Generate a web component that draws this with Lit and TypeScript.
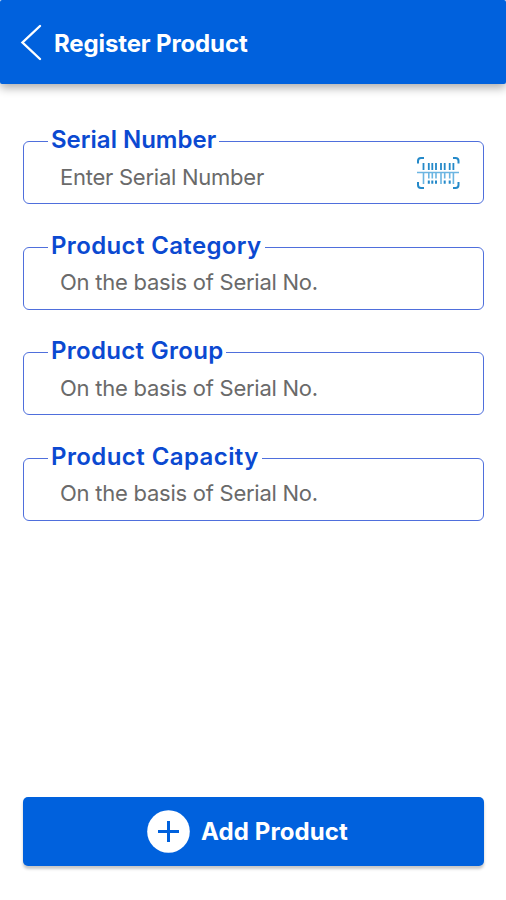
import { LitElement, html, css } from "lit";
import { customElement, property } from "lit/decorators.js";
import { styleMap } from "lit/directives/style-map.js";

@customElement("form-field")
class FormField extends LitElement {
  @property() label = "";
  @property() hint = "";
  @property({ type: Number }) tracking = 0;

  static styles = css`
    :host { display: block; }
    .box {
      position: relative;
      box-sizing: border-box;
      height: 63px;
      border: 1.5px solid #4f6fdc;
      border-radius: 6px;
      display: flex;
      align-items: center;
      justify-content: space-between;
      padding: 8px 23px 0 36px;
    }
    .label {
      position: absolute;
      left: 24px;
      top: -17px;
      padding: 0 3px;
      background: #fff;
      color: #0b49d1;
      font-size: 24px;
      line-height: 30px;
      font-weight: 600;
      white-space: nowrap;
    }
    .hint {
      color: #6a6a6a;
      font-size: 22px;
      line-height: 28px;
      letter-spacing: -0.25px;
      white-space: nowrap;
    }
  `;

  render() {
    return html`<div class="box">
      <span class="label" style=${styleMap({ letterSpacing: `${this.tracking}px` })}>${this.label}</span>
      <span class="hint">${this.hint}</span>
      <slot></slot>
    </div>`;
  }
}

@customElement("app-root")
class AppRoot extends LitElement {
  static styles = css`
    :host {
      display: flex;
      flex-direction: column;
      box-sizing: border-box;
      height: 900px;
      background: #fff;
      font-family: Inter, "Open Sans", sans-serif;
    }
    .bar {
      box-sizing: border-box;
      height: 84px;
      display: flex;
      align-items: center;
      gap: 12px;
      padding-left: 20px;
      background: #0061dd;
      border-radius: 2px;
      box-shadow: 0 4px 10px rgba(0, 0, 0, 0.32);
    }
    .title, .add {
      color: #fff;
      font-size: 24px;
      font-weight: 700;
      white-space: nowrap;
    }
    .title { letter-spacing: -0.13px; padding-top: 2px; }
    .add { letter-spacing: 0.1px; }
    .fields {
      display: flex;
      flex-direction: column;
      gap: 42.5px;
      padding: 57px 22px 0 23px;
      flex: 1;
    }
    .button {
      display: flex;
      align-items: center;
      justify-content: center;
      gap: 11px;
      height: 69px;
      margin: 0 22px 34px 23px;
      border: 0;
      padding: 0 12px 0 0;
      border-radius: 5px;
      background: #0061dd;
      font-family: inherit;
      box-shadow: 0 3px 3px rgba(0, 0, 0, 0.22);
    }
    svg { display: block; flex: none; }
    .scan { margin-top: -8px; }
  `;

  render() {
    return html`
      <header class="bar">
        <svg width="22" height="38" viewBox="0 0 22 38" fill="none" stroke="#fff" stroke-width="2.4" stroke-linecap="round">
          <path d="M20 3 2.500 19.500 20 36" />
        </svg>
        <span class="title">Register Product</span>
      </header>
      <main class="fields">
        <form-field label="Serial Number" hint="Enter Serial Number">
          <svg class="scan" width="44" height="34" viewBox="0 0 44 34" fill="none" stroke="#2489c9">
            <path stroke-width="2" d="M2 7.500V5a3 3 0 0 1 3-3H8M37 2h2.500a3 3 0 0 1 3 3V7.500M42.500 26v3a3 3 0 0 1-3 3H37M8 32H5a3 3 0 0 1-3-3V26" />
            <path stroke-width="1.8" d="M7.500 7v7M12.800 7v7M16.300 7v7M20 7v7M25 7v7M28.700 7v7M33.700 7v7M37.400 7v7" />
            <path stroke="#6bb5e2" stroke-width="1.500" d="M1 16.500h42" />
            <path stroke="#6bb5e2" stroke-width="1.600" d="M7.500 17v11M12.800 17v5.500M16.300 17v5.500M20 17v5.500M25 17v11M28.700 17v5.500M33.700 17v5.500M37.400 17v11" />
            <path stroke-width="2" d="M12.800 24.500v3.300M16.300 24.500v3.300M20 24.500v3.300M28.700 24.500v3.300M33.700 24.500v3.300" />
          </svg>
        </form-field>
        <form-field label="Product Category" hint="On the basis of Serial No." tracking="0.36"></form-field>
        <form-field label="Product Group" hint="On the basis of Serial No." tracking="0.3"></form-field>
        <form-field label="Product Capacity" hint="On the basis of Serial No." tracking="0.42"></form-field>
      </main>
      <button class="button">
        <svg width="43" height="43" viewBox="0 0 43 43">
          <circle cx="21.500" cy="21.500" r="21.300" fill="#fff" />
          <path d="M21.500 11v21M11 21.500h21" stroke="#0061dd" stroke-width="3" />
        </svg>
        <span class="add">Add Product</span>
      </button>
    `;
  }
}
